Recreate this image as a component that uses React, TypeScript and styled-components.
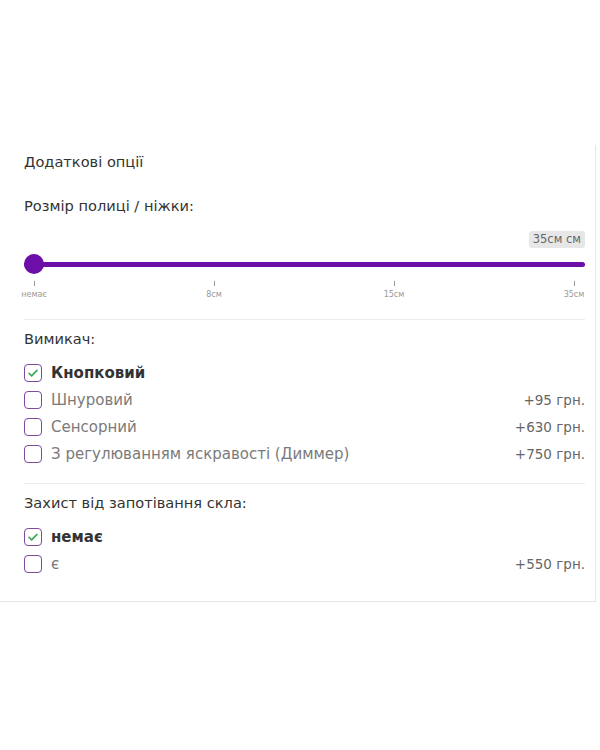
import React, { useState } from "react";
import styled, { createGlobalStyle } from "styled-components";

const GlobalStyle = createGlobalStyle`
  body {
    margin: 0;
    background: #fff;
    font-family: "DejaVu Sans", "Noto Sans", sans-serif;
  }
`;

type Option = { id: string; label: string; price?: number };

const switchOptions: Option[] = [
  { id: "button", label: "Кнопковий" },
  { id: "cord", label: "Шнуровий", price: 95 },
  { id: "touch", label: "Сенсорний", price: 630 },
  { id: "dimmer", label: "З регулюванням яскравості (Диммер)", price: 750 },
];

const fogOptions: Option[] = [
  { id: "none", label: "немає" },
  { id: "yes", label: "є", price: 550 },
];

const marks = ["немає", "8см", "15см", "35см"];

const App: React.FC = () => {
  const [switchType, setSwitchType] = useState("button");
  const [fog, setFog] = useState("none");

  return (
    <>
      <GlobalStyle />
      <Card>
        <Title>Додаткові опції</Title>
        <Label>Розмір полиці / ніжки:</Label>
        <BadgeRow>
          <Badge>35см см</Badge>
        </BadgeRow>
        <Slider>
          <Track />
          <Thumb />
        </Slider>
        <Marks>
          {marks.map((m) => (
            <Mark key={m}>
              <Tick />
              <MarkText>{m}</MarkText>
            </Mark>
          ))}
        </Marks>
        <Divider gap={20} />
        <Label tight>Вимикач:</Label>
        <OptionList>
          {switchOptions.map((o) => (
            <OptionRow key={o.id} onClick={() => setSwitchType(o.id)}>
              <Box>{switchType === o.id && <CheckMark />}</Box>
              <OptionText active={switchType === o.id}>{o.label}</OptionText>
              {o.price && <Price>+{o.price} грн.</Price>}
            </OptionRow>
          ))}
        </OptionList>
        <Divider gap={20} />
        <Label tight>Захист від запотівання скла:</Label>
        <OptionList>
          {fogOptions.map((o) => (
            <OptionRow key={o.id} onClick={() => setFog(o.id)}>
              <Box>{fog === o.id && <CheckMark />}</Box>
              <OptionText active={fog === o.id}>{o.label}</OptionText>
              {o.price && <Price>+{o.price} грн.</Price>}
            </OptionRow>
          ))}
        </OptionList>
      </Card>
    </>
  );
};

const CheckMark = () => (
  <svg width="12" height="12" viewBox="0 0 12 12" fill="none">
    <path d="M2 6.3l2.6 2.6L10 3.4" stroke="#3aa852" strokeWidth="1.6" strokeLinecap="round" strokeLinejoin="round" />
  </svg>
);

export default App;

const Card = styled.div`
  margin-top: 145px;
  width: 596px;
  box-sizing: border-box;
  padding: 8px 10px 28px 24px;
  border-right: 1px solid #e6e6e6;
  border-bottom: 1px solid #e6e6e6;
`;

const Title = styled.div`
  font-size: 14.6px;
  font-weight: 500;
  color: #333;
  line-height: 18px;
`;

const Label = styled.div<{ tight?: boolean }>`
  margin-top: ${(p) => (p.tight ? 10 : 26)}px;
  font-size: 14.6px;
  color: #333;
  line-height: 18px;
`;

const BadgeRow = styled.div`
  display: flex;
  justify-content: flex-end;
  margin-top: 16px;
`;

const Badge = styled.span`
  background: #e7e7e7;
  color: #666;
  font-size: 11.5px;
  line-height: 17px;
  padding: 0 4px;
  border-radius: 3px;
`;

const Slider = styled.div`
  position: relative;
  height: 20px;
  margin-top: 6px;
  display: flex;
  align-items: center;
`;

const Track = styled.div`
  flex: 1;
  height: 5px;
  border-radius: 3px;
  background: #6c0fa8;
`;

const Thumb = styled.div`
  position: absolute;
  left: 0;
  top: 0;
  width: 20px;
  height: 20px;
  border-radius: 50%;
  background: #6c0fa8;
`;

const Marks = styled.div`
  display: flex;
  justify-content: space-between;
  margin-top: 7px;
  padding: 0 11px 0 10px;
`;

const Mark = styled.div`
  width: 0;
  display: flex;
  flex-direction: column;
  align-items: center;
`;

const Tick = styled.div`
  width: 1px;
  height: 5px;
  background: #999;
`;

const MarkText = styled.div`
  margin-top: 4px;
  font-size: 8px;
  color: #999;
  white-space: nowrap;
`;

const Divider = styled.div<{ gap?: number }>`
  height: 1px;
  background: #ececec;
  margin-top: ${(p) => p.gap ?? 18}px;
`;

const OptionList = styled.div`
  margin-top: 16px;
  display: flex;
  flex-direction: column;
  gap: 9px;
`;

const OptionRow = styled.div`
  display: flex;
  align-items: center;
  height: 18px;
  cursor: pointer;
`;

const Box = styled.span`
  width: 16px;
  height: 16px;
  border: 1px solid #7d4a9c;
  border-radius: 4px;
  display: flex;
  align-items: center;
  justify-content: center;
  flex-shrink: 0;
`;

const OptionText = styled.span<{ active: boolean }>`
  margin-left: 9px;
  font-size: 15px;
  font-weight: ${(p) => (p.active ? 700 : 400)};
  color: ${(p) => (p.active ? "#333" : "#7a7a7a")};
  flex: 1;
`;

const Price = styled.span`
  font-size: 13.5px;
  color: #666;
`;
